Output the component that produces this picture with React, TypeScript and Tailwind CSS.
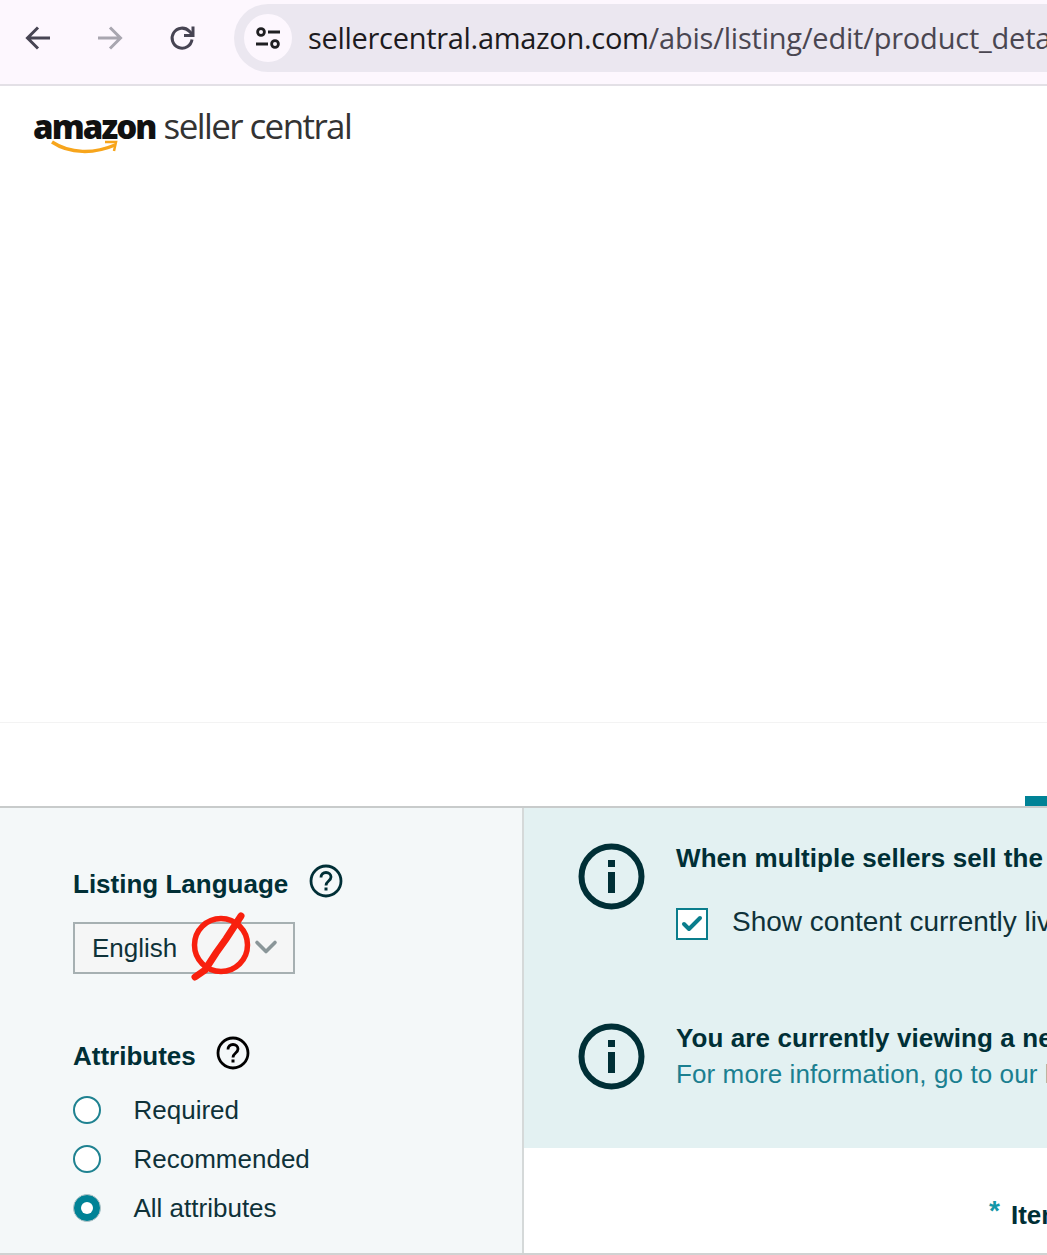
import React from 'react';
import { Check, ChevronDown } from 'lucide-react';

const arial = { fontFamily: '"Liberation Sans", Arial, sans-serif' };

const BackIcon = ({ className }: { className: string }) => (
    <svg viewBox="0 0 26 26" className={className} fill="none" stroke="currentColor" strokeWidth="3">
        <path d="M25 13H3M13 2.5 2.5 13 13 23.5" />
    </svg>
);

const ReloadIcon = () => (
    <svg viewBox="0 0 26 26" className="w-[26px] h-[26px] text-[#474453]" fill="none" stroke="currentColor" strokeWidth="3">
        <path d="M23 14.5a10 10 0 1 1-2.800-8.400l2.800 2.900" />
        <path d="M24 1.500v9h-9" />
    </svg>
);

const TuneIcon = () => (
    <svg viewBox="0 0 26 26" className="w-[26px] h-[26px] text-[#1f1f22]" fill="none" stroke="currentColor" strokeWidth="2.800">
        <circle cx="6" cy="7" r="3.400" />
        <path d="M13 7h12M1 19h12" />
        <circle cx="20" cy="19" r="3.400" />
    </svg>
);

const HelpIcon = ({ className }: { className: string }) => (
    <svg viewBox="0 0 34 34" className={className} fill="none" stroke="currentColor" strokeWidth="2.800">
        <circle cx="17" cy="17" r="15" />
        <path d="M12 13.500c0-3 2.200-5 5-5s5 2 5 4.600c0 4-5 3.900-5 8.400" />
        <rect x="15.500" y="23.500" width="3" height="3" fill="currentColor" stroke="none" />
    </svg>
);

const InfoIcon = () => (
    <svg viewBox="0 0 67 67" className="w-[67px] h-[67px] shrink-0 text-[#002f36]" fill="none" stroke="currentColor" strokeWidth="6">
        <circle cx="33.500" cy="33.500" r="30" />
        <rect x="30" y="17" width="7" height="7" fill="currentColor" stroke="none" />
        <rect x="30" y="29" width="7" height="21" fill="currentColor" stroke="none" />
    </svg>
);

const Scribble = () => (
    <svg viewBox="0 0 62 70" className="absolute left-[115px] top-[-12px] w-[62px] h-[70px] text-[#f8200e]" fill="none" stroke="currentColor">
        <circle cx="31" cy="33" r="26.500" strokeWidth="5.500" />
        <path d="M51 4 36 27 26 41 15 58 5 65" strokeWidth="7" strokeLinecap="round" />
    </svg>
);

const Radio = ({ label, checked }: { label: string; checked?: boolean }) => (
    <div className="flex items-center h-[28px]">
        {checked ? (
            <span className="w-[28px] h-[28px] rounded-full bg-[#008296] border border-[#b5c5c8] flex items-center justify-center">
                <span className="w-[12px] h-[12px] rounded-full bg-white" />
            </span>
        ) : (
            <span className="w-[28px] h-[28px] rounded-full bg-white border-2 border-[#1f8291]" />
        )}
        <span className="ml-[32.5px] text-[26px] leading-[28px] text-[#0f3239]">{label}</span>
    </div>
);

export default function App() {
    return (
        <div className="w-[1047px] h-[1255px] overflow-hidden bg-white flex flex-col" style={arial}>
            {/* browser toolbar */}
            <div className="h-[86px] shrink-0 bg-[#fdf7fe] border-b-2 border-[#e3e0e6] flex pl-[25px] pt-[4px]">
                <div className="h-[68px] flex items-center">
                    <BackIcon className="w-[26px] h-[26px] text-[#474453]" />
                    <BackIcon className="w-[26px] h-[26px] ml-[46px] rotate-180 text-[#a9a6b0]" />
                    <div className="ml-[46px]"><ReloadIcon /></div>
                </div>
                <div className="ml-[39px] flex-1 min-w-0 h-[68px] rounded-l-[34px] bg-[#ebe7f0] flex items-center pl-[10px] overflow-hidden">
                    <div className="w-[48px] h-[48px] rounded-full bg-[#fdf7fe] flex items-center justify-center shrink-0">
                        <TuneIcon />
                    </div>
                    <span className="ml-[16px] text-[29px] tracking-[-0.3px] whitespace-nowrap text-[#1d1b20]" style={{ fontFamily: '"Open Sans", "Noto Sans", sans-serif' }}>
                        sellercentral.amazon.com<span className="tracking-[-0.2px] text-[#4a4651]">/abis/listing/edit/product_detail</span>
                    </span>
                </div>
            </div>

            {/* logo */}
            <div className="h-[637px] shrink-0 pl-[33px] pt-[14px] border-b border-[#f3f3f3]">
                <div className="relative w-[330px] h-[54px] flex items-baseline whitespace-nowrap">
                    <span className="text-[33px] font-extrabold tracking-[-1.900px] text-[#111]" style={{ fontFamily: '"Open Sans", sans-serif' }}>amazon</span>
                    <span className="ml-[8px] text-[35px] tracking-[-1.600px] text-[#333]" style={{ fontFamily: '"Open Sans", sans-serif' }}>seller central</span>
                    <svg viewBox="0 0 70 16" className="absolute left-[17px] top-[40px] w-[70px] h-[16px]" fill="none" stroke="#f7a51c" strokeWidth="3.500">
                        <path d="M2 2c18 12 42 12 63 3" />
                        <path d="M55 2h11l-2 9" strokeWidth="2.500" />
                    </svg>
                </div>
            </div>

            {/* teal tab edge */}
            <div className="h-[83px] shrink-0 flex justify-end items-end">
                <div className="w-[22px] h-[10px] bg-[#008296]" />
            </div>

            {/* attribute panel */}
            <div className="h-[449px] shrink-0 flex border-t-2 border-[#c8cbcb] border-b-2 border-b-[#d0d2d2]">
                <div className="w-[524px] shrink-0 bg-[#f4f8f9] border-r-2 border-[#d5d9d9] pl-[73px] pt-[58px]">
                    <div className="flex items-center h-[36px]">
                        <span className="text-[26px] font-bold text-[#002f36]">Listing Language</span>
                        <HelpIcon className="ml-[21px] w-[34px] h-[34px] -mt-[6px] text-[#002f36]" />
                    </div>
                    <div className="relative mt-[20px] w-[222px] h-[52px] border-2 border-[#a6b0b2] bg-[#f5f6f6] flex items-center pl-[17px] text-[26px] text-[#0f3239]">
                        English
                        <ChevronDown className="absolute right-[9px] top-[5px] w-[36px] h-[36px] text-[#8a9699]" strokeWidth={2.4} />
                        <Scribble />
                    </div>
                    <div className="mt-[64px] flex items-center h-[36px]">
                        <span className="text-[26px] font-bold text-[#002f36]">Attributes</span>
                        <HelpIcon className="ml-[20px] w-[34px] h-[34px] -mt-[6px] text-black" />
                    </div>
                    <div className="mt-[22px] flex flex-col gap-[21px]">
                        <Radio label="Required" />
                        <Radio label="Recommended" />
                        <Radio label="All attributes" checked />
                    </div>
                </div>

                <div className="flex-1 min-w-0 flex flex-col">
                    <div className="h-[340px] shrink-0 bg-[#e3f1f2] pl-[54px] pt-[35px] overflow-hidden">
                        <div className="flex">
                            <InfoIcon />
                            <div className="ml-[31px] whitespace-nowrap">
                                <div className="text-[26px] leading-[30px] tracking-[0.1px] font-bold text-[#002f36]">When multiple sellers sell the same product</div>
                                <div className="mt-[31px] flex items-center">
                                    <span className="w-[32px] h-[32px] bg-white border-2 border-[#0a7d8c] flex items-center justify-center">
                                        <Check className="w-[24px] h-[24px] text-[#0a7d8c]" strokeWidth={4} />
                                    </span>
                                    <span className="ml-[24px] -mt-[3px] text-[28px] text-[#0f3239]">Show content currently live on the page</span>
                                </div>
                            </div>
                        </div>
                        <div className="flex mt-[80px]">
                            <InfoIcon />
                            <div className="ml-[31px] whitespace-nowrap">
                                <div className="text-[26px] leading-[30px] tracking-[0.1px] font-bold text-[#002f36]">You are currently viewing a new listing</div>
                                <div className="mt-[6px] text-[26px] leading-[30px] tracking-[0.1px] text-[#1b7f90]">For more information, go to our help page</div>
                            </div>
                        </div>
                    </div>
                    <div className="flex-1 bg-white pl-[465px] pt-[48px] whitespace-nowrap overflow-hidden flex items-start">
                        <span className="text-[28px] leading-[30px] font-bold text-[#1497a8]">*</span>
                        <span className="ml-[11px] mt-[3px] text-[26px] leading-[32px] font-bold text-[#002f36]">Item Name</span>
                    </div>
                </div>
            </div>
        </div>
    );
}
